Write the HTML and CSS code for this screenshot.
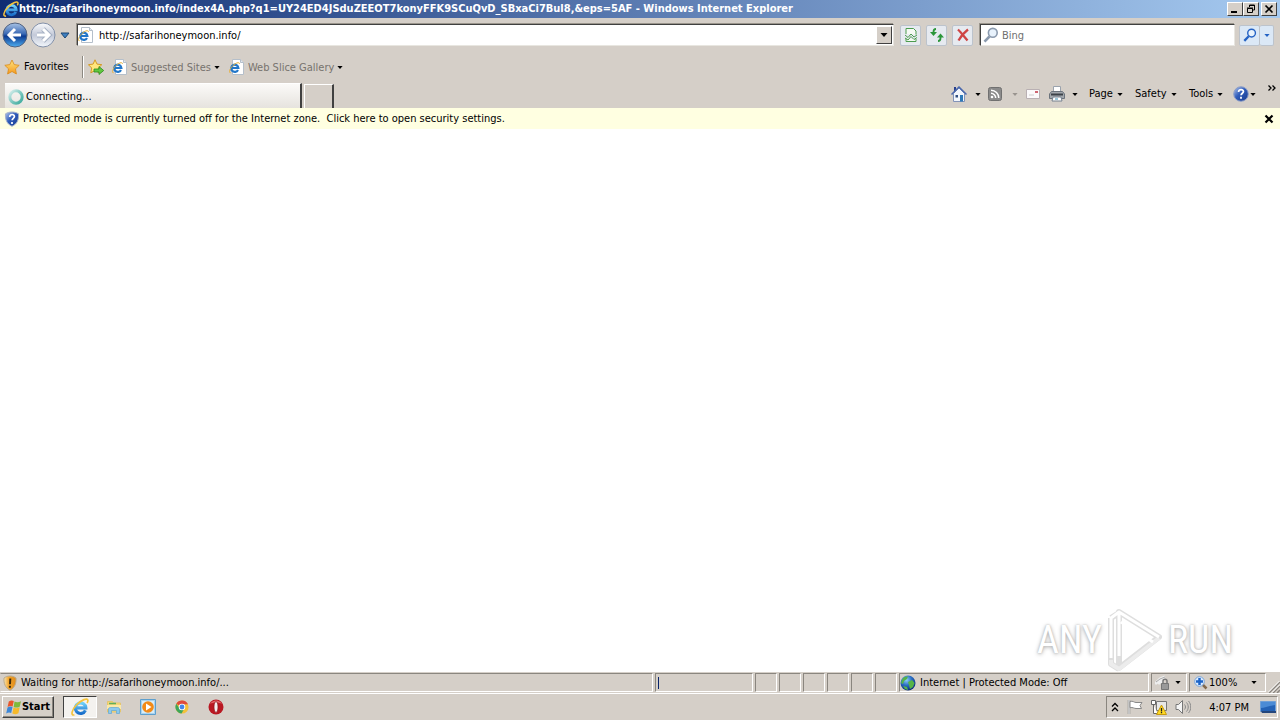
FILE: index.html
```html
<!DOCTYPE html>
<html lang="en">
<head>
<meta charset="utf-8">
<title>Windows Internet Explorer</title>
<link rel="stylesheet" href="styles.css">
</head>
<body>
<svg class="defs" aria-hidden="true">
  <defs>
    <linearGradient id="blue" x1="0" y1="0" x2="0" y2="1"><stop offset="0" stop-color="#a9c4e6"/><stop offset=".45" stop-color="#3a69b4"/><stop offset=".55" stop-color="#0c3a91"/><stop offset="1" stop-color="#4fb0f2"/></linearGradient>
    <linearGradient id="pale" x1="0" y1="0" x2="0" y2="1"><stop offset="0" stop-color="#fafbfd"/><stop offset=".5" stop-color="#c3c9d8"/><stop offset="1" stop-color="#f3f7fc"/></linearGradient>
    <linearGradient id="gold" x1="0" y1="0" x2="0" y2="1"><stop offset="0" stop-color="#ffe680"/><stop offset="1" stop-color="#f5981b"/></linearGradient>
    <linearGradient id="ieblue" x1="0" y1="0" x2="0" y2="1"><stop offset="0" stop-color="#6fd2fa"/><stop offset="1" stop-color="#1a6fcb"/></linearGradient>
    <linearGradient id="spin" x1="0" y1="0" x2="1" y2="1"><stop offset="0" stop-color="#d9efed"/><stop offset=".4" stop-color="#8fd0ca"/><stop offset="1" stop-color="#3aa99b"/></linearGradient>
    <linearGradient id="disc" x1="0" y1="0" x2="1" y2="1"><stop offset="0" stop-color="#b9cbee"/><stop offset=".45" stop-color="#2f5cba"/><stop offset="1" stop-color="#183a8c"/></linearGradient>
    <linearGradient id="amber" x1="0" y1="0" x2="1" y2="0"><stop offset="0" stop-color="#f7e3b0"/><stop offset=".4" stop-color="#f3a52c"/><stop offset="1" stop-color="#e08a18"/></linearGradient>
    <radialGradient id="earth" cx=".4" cy=".3" r=".7"><stop offset="0" stop-color="#8fd0f5"/><stop offset=".5" stop-color="#2b6fc4"/><stop offset="1" stop-color="#0b2f7c"/></radialGradient>
  </defs>
  <symbol id="ie" viewBox="0 0 16 16"><path d="M12.800 11A4.700 4.700 0 1 1 13.200 8.800H5" fill="none" stroke="url(#ieblue)" stroke-width="2.800"/><path d="M3 15C-.5 16 .5 10.500 5 6S14.500-.3 15 2c.1.800-.2 1.600-.7 2.400" fill="none" stroke="#f5c33c" stroke-width="1.500"/></symbol>
  <symbol id="iepage" viewBox="0 0 16 16"><path d="M3.500.5h8l3 3v12h-11z" fill="#fff" stroke="#b5bfca"/><path d="M11.500.5v3h3" fill="#e3e9f0" stroke="#b5bfca"/><path d="M9 11A3.600 3.600 0 1 1 9.400 9H3" fill="none" stroke="#2277c9" stroke-width="2.200"/><path d="M1.500 13.700C-.8 13.800.8 9.500 4 6.500s6.500-3.700 6.500-1.700" fill="none" stroke="#e8b13a"/></symbol>
  <symbol id="star" viewBox="0 0 16 16"><path d="M8 1l2.200 4.600 5 .7-3.700 3.500.9 5.200L8 12.500 3.600 15l.9-5.200L.8 6.300l5-.7z" fill="url(#gold)" stroke="#d98a1b" stroke-width=".8"/></symbol>
  <symbol id="addstar" viewBox="0 0 16 16"><path d="M7 .8l2 4.300 4.800.6-3.500 3.300.9 4.800L7 11.500 2.800 13.800l.9-4.800L.4 5.700l4.700-.6z" fill="#ffe67c" stroke="#d39a25"/><path d="M6 10h5V7.500l4.700 4-4.700 4V13H6z" fill="#62c840" stroke="#2b8a1e" stroke-width=".8"/></symbol>
  <symbol id="caret" viewBox="0 0 7 4"><path d="M0 0h7L3.500 4z" fill="currentColor"/></symbol>
  <symbol id="shield" viewBox="0 0 16 16"><path d="M8 1c2.500 0 4.500.6 6.500 1.800.5 6-1.500 10.300-6.500 12.500C3 13.100 1 8.800 1.500 2.800 3.500 1.600 5.500 1 8 1z" fill="url(#disc)" stroke="#a8b4cb"/><path d="M5.700 6c0-3.500 5-3 4.700-.3-.2 1.600-2.200 1.800-2.300 3.600M8 11v2" fill="none" stroke="#fff" stroke-width="1.700"/></symbol>
  <symbol id="warn" viewBox="0 0 16 16"><path d="M8 1c2.300 0 4.200.7 6 2 .5 5.500-1.500 10-6 12.200C3.500 13 1.500 8.500 2 3 3.800 1.700 5.700 1 8 1z" fill="url(#amber)" stroke="#b9a98c"/><path d="M8.300 3.500L8 9.200M7.900 10.700v2" stroke="#3c2a0c" stroke-width="2"/></symbol>
  <symbol id="lens" viewBox="0 0 16 16"><path d="M6.500 9.500L1.500 14.700" stroke="currentColor" stroke-width="2.600"/><circle cx="9.800" cy="5.800" r="4.400" fill="#e8f2fc" stroke="currentColor" stroke-width="1.600"/></symbol>
</svg>

<header class="titlebar">
  <svg class="i16"><use href="#ie"/></svg>
  <h1>http://safarihoneymoon.info/index4A.php?q1=UY24ED4JSduZEEOT7konyFFK9SCuQvD_SBxaCi7Bul8,&amp;eps=5AF - Windows Internet Explorer</h1>
  <div class="winbtns">
    <button aria-label="Minimize"><svg viewBox="0 0 12 10"><path d="M2 8h6" stroke="#000" stroke-width="2"/></svg></button>
    <button aria-label="Restore"><svg viewBox="0 0 12 10"><path d="M4.500 3V1h5v5H8M4 1.500h6M2.500 4.500h5v4h-5zM2 4h6" fill="none" stroke="#000"/></svg></button>
    <button class="close" aria-label="Close"><svg viewBox="0 0 12 10"><path d="M2.500 1.500l7 7m0-7l-7 7" stroke="#000" stroke-width="1.700"/></svg></button>
  </div>
</header>

<nav class="nav">
  <div class="travel">
    <button aria-label="Back"><svg class="i26" viewBox="0 0 26 26"><circle cx="13" cy="13" r="12" fill="url(#blue)" stroke="#50617f"/><path d="M13 7L7 13l6 6M7.500 13H19" fill="none" stroke="#fff" stroke-width="3"/></svg></button>
    <button aria-label="Forward"><svg class="i26" viewBox="0 0 26 26"><circle cx="13" cy="13" r="12" fill="url(#pale)" stroke="#8290a8"/><path d="M13 7l6 6-6 6M18.500 13H7" fill="none" stroke="#a5b0c3" stroke-width="5"/><path d="M13 7l6 6-6 6M18.500 13H7" fill="none" stroke="#fff" stroke-width="3"/></svg></button>
    <button aria-label="Recent pages"><svg class="recent" viewBox="0 0 10 7"><path d="M1 1h8L5 6z" fill="#3d7fc0" stroke="#1c4775"/></svg></button>
  </div>
  <div class="field address">
    <svg class="i16"><use href="#iepage"/></svg>
    <input type="text" aria-label="Address" value="http://safarihoneymoon.info/">
    <button class="drop" aria-label="Show addresses"><svg class="caret wide"><use href="#caret"/></svg></button>
  </div>
  <div class="tools">
    <button aria-label="Compatibility View"><svg class="i16" viewBox="0 0 16 16"><path d="M3 7V1.500h7.500L13 4v3.500M3 11.500v3h10V12" fill="#f5faf4" stroke="#4c9c4f"/><path d="M2 8l3 2.500 3-3.500 3 3 3-2M2 11l3 2 3-3.500 3 3 3-2" fill="none" stroke="#4c9c4f"/></svg></button>
    <button aria-label="Refresh"><svg class="i16" viewBox="0 0 16 16"><path d="M7 2C5 2 4.500 3 4.500 5v1M9 14c2 0 2.500-1 2.500-3v-1" fill="none" stroke="#2c963a" stroke-width="1.800"/><path d="M1 5h7L4.500 9zM8 10.500h7l-3.500-4z" fill="#2c963a"/></svg></button>
    <button aria-label="Stop"><svg class="i16" viewBox="0 0 16 16"><path d="M3 2.500c3 3 6 7 9.500 11M13 2.500C9 5.500 6 9 3.500 13.500" fill="none" stroke="#cf4444" stroke-width="2.300"/></svg></button>
  </div>
  <div class="field search">
    <svg class="i16 grey"><use href="#lens"/></svg>
    <input type="text" aria-label="Search" placeholder="Bing">
  </div>
  <div class="go">
    <button aria-label="Search"><svg class="i14 azure"><use href="#lens"/></svg></button>
    <button aria-label="Search options"><svg class="caret azure"><use href="#caret"/></svg></button>
  </div>
</nav>

<nav class="favorites">
  <button class="fav"><svg class="i16"><use href="#star"/></svg>Favorites</button>
  <span class="rule"></span>
  <button aria-label="Add to Favorites Bar"><svg class="i16"><use href="#addstar"/></svg></button>
  <button class="dim suggested"><svg class="i16"><use href="#iepage"/></svg><span>Suggested Sites</span><svg class="caret"><use href="#caret"/></svg></button>
  <button class="dim"><svg class="i16"><use href="#iepage"/></svg><span>Web Slice Gallery</span><svg class="caret"><use href="#caret"/></svg></button>
</nav>

<div class="tabrow">
  <button class="tab"><svg class="i16" viewBox="0 0 16 16"><circle cx="8" cy="8" r="6.200" fill="none" stroke="url(#spin)" stroke-width="3"/></svg>Connecting...</button>
  <button class="newtab" aria-label="New Tab"></button>
  <div class="commands">
    <button class="cmd c-home" aria-label="Home"><svg class="i16" viewBox="0 0 16 16"><path d="M3 1h2v4H3z" fill="#27408d"/><path d="M2.500 7.500L8 2l5.500 5.500v8h-11z" fill="#f2f6fc" stroke="#8293b8"/><path d="M.5 8.500L8 1l7.500 7.500" fill="none" stroke="#4a68ad" stroke-width="1.500"/><path d="M9 9h3v6.500H9z" fill="#2e79b8"/><path d="M4.500 9h2.500v2.500H4.500z" fill="#314f81"/></svg><svg class="caret"><use href="#caret"/></svg></button>
    <button class="cmd c-feed" aria-label="Feeds"><svg class="i14" viewBox="0 0 14 14"><rect x=".5" y=".5" width="13" height="13" rx="2" fill="#8b8b8b" stroke="#707070"/><circle cx="4" cy="10" r="1.300" fill="#fff"/><path d="M3 6.300A4.700 4.700 0 0 1 7.700 11M3 3.200A7.800 7.800 0 0 1 10.800 11" fill="none" stroke="#fff" stroke-width="1.500"/></svg><svg class="caret faint"><use href="#caret"/></svg></button>
    <button class="cmd c-mail" aria-label="Read mail"><svg class="i14" viewBox="0 0 14 14"><path d="M.5 2.500h13v9H.5z" fill="#fbf9fa" stroke="#b9b0b3"/><path d="M9 4h3v2H9z" fill="#cf6571"/><path d="M3 8h5" stroke="#ccc"/></svg></button>
    <button class="cmd c-print" aria-label="Print"><svg class="i16" viewBox="0 0 16 16"><path d="M4.500.5h7v6h-7z" fill="#fff" stroke="#9ba3ad"/><path d="M2.500 5.500h11l2 2.500v4.500H.5V8z" fill="#a3a8ad" stroke="#6b737c"/><path d="M2 8.500h12" stroke="#3c4248" stroke-width="2"/><path d="M4 11h8l1 4H3z" fill="#fff" stroke="#77828f"/><path d="M6 13h3" stroke="#3b91b5"/></svg><svg class="caret"><use href="#caret"/></svg></button>
    <button class="cmd c-page">Page<svg class="caret"><use href="#caret"/></svg></button>
    <button class="cmd c-safe">Safety<svg class="caret"><use href="#caret"/></svg></button>
    <button class="cmd c-tool">Tools<svg class="caret"><use href="#caret"/></svg></button>
    <button class="cmd c-help" aria-label="Help"><svg class="i16" viewBox="0 0 16 16"><circle cx="8" cy="8" r="7.300" fill="url(#disc)" stroke="#8e9fc8"/><path d="M5.600 6c0-3.400 5-3 4.800-.3C10.200 7.300 8.200 7.300 8.100 9.300M8 10.800v2" fill="none" stroke="#fff" stroke-width="1.800"/></svg><svg class="caret"><use href="#caret"/></svg></button>
    <button class="more" aria-label="More commands"><svg viewBox="0 0 8 6"><path d="M.5.5L3 3 .5 5.500M4.500.5L7 3 4.500 5.500" fill="none" stroke="#000" stroke-width="1.300"/></svg></button>
  </div>
</div>

<div class="infobar">
  <svg class="i16"><use href="#shield"/></svg>
  <a href="#settings">Protected mode is currently turned off for the Internet zone.&nbsp; Click here to open security settings.</a>
  <button aria-label="Close information bar"><svg viewBox="0 0 10 10"><path d="M1.500 1.500l7 7m0-7l-7 7" stroke="#000" stroke-width="2.200"/></svg></button>
</div>

<main class="page">
  <div class="watermark">
    <span>ANY</span>
    <svg viewBox="0 0 56 64"><g fill="none" stroke-linejoin="round"><g stroke="#dedede" stroke-width="6"><path d="M12 4l40 25-40 31z"/><path d="M4 10v46l8 5M4 10l8-5"/></g><path d="M4 52v4l8 5 40-31" stroke="#ececec" stroke-width="4"/><path d="M4 50V10l8-6v44M12 4l40 25M14 14l32 20" stroke="#fff" stroke-width="3"/></g></svg>
    <span>RUN</span>
  </div>
</main>

<footer class="status">
  <div class="cell message"><svg class="i16"><use href="#warn"/></svg>Waiting for http://safarihoneymoon.info/...</div>
  <div class="cell progress"><span class="bar"></span></div>
  <div class="cell slot"></div><div class="cell slot"></div><div class="cell slot"></div><div class="cell slot"></div><div class="cell slot"></div><div class="cell slot"></div>
  <div class="cell zone"><svg class="i16" viewBox="0 0 16 16"><circle cx="8" cy="8" r="7.500" fill="url(#earth)"/><path d="M2 5c1-3 4-4 6-3.500L7 4 4 6l-1 3-2-1zM8 7l4-2 2.500 3-1.500 4-3 2-1-4zM3 11l4 1 1 3-3-1z" fill="#55b447"/></svg>Internet | Protected Mode: Off</div>
  <button class="cell privacy" aria-label="InPrivate filtering"><svg class="i16" viewBox="0 0 16 16"><path d="M0 9l5-5 5-2M3 9c2-3 4-3 6-2" fill="none" stroke="#eee" stroke-width="3"/><path d="M1 7l4-3 5-2" fill="none" stroke="#aaa"/><path d="M8 9V6c0-2.500 4-2.500 4 0v3" fill="none" stroke="#777" stroke-width="1.500"/><path d="M6.500 8.500h7v6h-7z" fill="#999" stroke="#777"/></svg><svg class="caret"><use href="#caret"/></svg></button>
  <button class="cell zoom"><svg class="i14" viewBox="0 0 14 14"><path d="M8.500 8.500l4 4" stroke="#83694b" stroke-width="2.500"/><circle cx="5.500" cy="5.500" r="4.800" fill="#dcecff" stroke="#78a3d7"/><path d="M5.500 2v7M2 5.500h7" stroke="#1c64c8" stroke-width="2.500"/></svg><span>100%</span><svg class="caret"><use href="#caret"/></svg></button>
  <svg class="grip" viewBox="0 0 12 12"><path d="M1 12L12 1M5 12l7-7M9 12l3-3" stroke="#8b8680" stroke-width="1.500"/><path d="M0 11.500L11.500 0M4 11.500L12 3.500" stroke="#fff"/></svg>
</footer>

<div class="taskbar">
  <button class="start"><svg class="i16" viewBox="0 0 16 16"><path d="M2.800 2.500c2-1.500 3.500-1.300 5-.5L6.600 7.500c-1.600-.8-3-.8-5 .4z" fill="#e9562c"/><path d="M8.500 2.500c2 1 4 1 6.500-.3l-1.300 5.500c-2.500 1.200-4.200 1-6 .2z" fill="#7fba3c"/><path d="M1.500 8.400c2-1.200 3.400-1.200 5-.4l-1.300 6C3.500 13.200 2.200 13.200.2 14.500z" fill="#3c87d8"/><path d="M7.500 8.500c2 1 3.800 1 6.200-.2l-1.300 6c-2.300 1.200-4 1-6 .2z" fill="#f6b92b"/></svg>Start</button>
  <button class="task active" aria-label="Internet Explorer"><svg class="i18"><use href="#ie"/></svg></button>
  <button class="task" aria-label="Explorer"><svg class="i16" viewBox="0 0 16 16"><path d="M1.500 2.500h5l1 1.500h7v9h-13z" fill="#f5d778" stroke="#e5c56d"/><path d="M3 4.500h7" stroke="#5fae5b" stroke-width="1.500"/><path d="M1 6h14v4H1z" fill="#fbe9a9"/><path d="M2.500 14.500V10c0-1 1-1.500 2-1.500h7c1 0 2 .5 2 1.500v4.500h-3v-3h-5v3z" fill="#8cc9ee" stroke="#62a6d3" stroke-width=".7"/></svg></button>
  <button class="task" aria-label="Media Player"><svg class="i16" viewBox="0 0 16 16"><path d="M.5.500h15v15H.5z" fill="#a9d3ef" stroke="#5e9fcd"/><path d="M2 2h12v12H2z" fill="#d7edf9"/><circle cx="8" cy="8" r="5.800" fill="#f28a18"/><path d="M6 4.500l5.500 3.500L6 11.500z" fill="#fff"/></svg></button>
  <button class="task" aria-label="Chrome"><svg class="i14" viewBox="0 0 16 16"><circle cx="8" cy="8" r="7.500" fill="#f3c13a"/><path d="M8 8L1.500 4.200A7.500 7.500 0 0 1 14.800 4.800L8 5z" fill="#df4a3c"/><path d="M1.500 4.200A7.500 7.500 0 0 0 7.500 15.500L10.500 10 5.500 10z" fill="#3da55b"/><circle cx="8" cy="8" r="3.700" fill="#fff"/><circle cx="8" cy="8" r="2.800" fill="#4586e8"/></svg></button>
  <button class="task" aria-label="Opera"><svg class="i16" viewBox="0 0 16 16"><circle cx="8" cy="8" r="7.500" fill="#b91822"/><path d="M2 5a7 7 0 0 1 12 0c-3-2-9-2-12 0z" fill="#e4666a"/><ellipse cx="8" cy="8" rx="2" ry="5.500" fill="#f5eeee" stroke="#8b1218" stroke-width=".7"/></svg></button>
  <div class="tray">
    <svg class="chev" viewBox="0 0 8 10"><path d="M1 4.500L4 1.500l3 3M1 9l3-3 3 3" fill="none" stroke="#000" stroke-width="1.300"/></svg>
    <svg class="i16" viewBox="0 0 16 16"><path d="M2 1v14" stroke="#888" stroke-width="2.500"/><path d="M2 1v14" stroke="#fff"/><path d="M3 2.500c3-1 4 1 6 1h6l-2 3 1.500 3H9c-2 0-3-1.500-6-.8z" fill="#fff" stroke="#888"/></svg>
    <svg class="i16" viewBox="0 0 16 16"><path d="M5.500 2.500h10v9h-10z" fill="#e8e8e8" stroke="#777"/><path d="M.5 1.500h4v4h-4zM2.500 5.500v9h4" fill="#fff" stroke="#666"/><path d="M10.500 6l5 9.500h-10z" fill="#ffda23" stroke="#c79a10"/><path d="M10.500 9v3.500M10.500 13v1.300" stroke="#222" stroke-width="1.300"/></svg>
    <svg class="i16" viewBox="0 0 16 16"><path d="M1 5.500h2.500l4-4v13l-4-4H1z" fill="#f4f4f4" stroke="#777"/><path d="M9.500 5.500c1.300 1.500 1.300 3.500 0 5M11.500 3.500c2.300 2.500 2.300 6.500 0 9M13.500 2c3 3.500 3 8.500 0 12" fill="none" stroke="#888"/></svg>
    <time>4:07 PM</time>
    <button class="desk" aria-label="Show desktop"><svg class="i16" viewBox="0 0 16 16"><path d="M.5 2.500h15v10H.5z" fill="#2462b5" stroke="#6f9fd6"/><path d="M1 3h14v3C9 7 5 9 1 9z" fill="#4b8bd5"/><path d="M1 12h15v2H2z" fill="#24467c"/></svg></button>
  </div>
</div>
</body>
</html>
```
FILE: styles.css
```css
* { box-sizing: border-box; }
html, body { height: 100%; }
body {
  margin: 0;
  display: flex;
  flex-direction: column;
  background: #d5cfc8;
  color: #000;
  font: 11px/14px "DejaVu Sans Condensed", "DejaVu Sans", sans-serif;
}
button, input {
  font: inherit;
  color: inherit;
  border: 0;
  padding: 0;
  margin: 0;
  background: none;
}
button { display: flex; align-items: center; justify-content: center; white-space: nowrap; }
input { outline: 0; flex: 1; min-width: 0; }
svg { display: block; flex: none; }
.defs { position: absolute; width: 0; height: 0; }
.i14 { width: 14px; height: 14px; }
.i16 { width: 16px; height: 16px; }
.i18 { width: 18px; height: 18px; }
.i26 { width: 26px; height: 26px; }
.caret { width: 6px; height: 3px; }
.wide { width: 8px; height: 4px; }
.faint { color: #99948f; }
.grey { color: #8b9aae; }
.azure { color: #2462c4; }

.titlebar {
  display: flex;
  align-items: center;
  height: 18px;
  padding: 0 3px;
  background: linear-gradient(90deg, #0f2c72, #a6caf0);
}
.titlebar h1 {
  flex: 1;
  min-width: 0;
  margin: 0;
  overflow: hidden;
  white-space: nowrap;
  font-size: 11px;
  line-height: 16px;
  color: #fff;
}
.winbtns { display: flex; }
.winbtns button {
  width: 16px;
  height: 14px;
  background: #d5cfc8;
  border: 1px solid;
  border-color: #fff #404040 #404040 #fff;
}
.winbtns svg { width: 12px; height: 10px; }
.winbtns .close { margin-left: 2px; }

.nav { display: flex; align-items: center; height: 34px; padding: 0 6px 0 2px; }
.travel { display: flex; align-items: center; gap: 2px; width: 75px; }
.recent { width: 10px; height: 7px; margin-left: 2px; }
.field {
  display: flex;
  align-items: center;
  height: 22px;
  background: #fff;
  border: 1px solid;
  border-color: #404040 #e8e6e0 #e8e6e0 #404040;
  box-shadow: -1px -1px #9a958c;
}
.field input { padding: 1px 0 0 4px; height: 18px; }
.address { flex: 1; }
.address input { padding-left: 5px; }
.drop {
  width: 16px;
  height: 18px;
  margin-right: 1px;
  background: #d5cfc8;
  border: 1px solid;
  border-color: #fff #404040 #404040 #fff;
}
.tools { display: flex; gap: 5px; margin: 0 7px 0 6px; }
.tools button, .go button {
  width: 21px;
  height: 21px;
  background: #e6eaf0;
  border: 1px solid #bcc3cc;
  border-radius: 2px;
}
.search { width: 255px; padding-left: 2px; }
.search input { padding-left: 3px; }
.search input::placeholder { color: #6f6f6f; opacity: 1; }
.go { display: flex; margin-left: 4px; }
.go button { background: #dbe8f6; }
.go button + button { width: 14px; border-left: 0; }

.favorites { display: flex; align-items: center; height: 30px; padding: 0 4px; }
.fav { gap: 4px; width: 68px; justify-content: flex-start; }
.rule { width: 2px; height: 22px; margin: 0 4px 0 10px; border-left: 1px solid #8c8881; border-right: 1px solid #fff; }
.dim { gap: 3px; margin-left: 9px; }
.favorites .suggested { margin-left: 8px; }
.dim span { padding-top: 1px; color: #77736e; }

.tabrow { display: flex; align-items: flex-end; height: 26px; padding-left: 5px; }
.tab {
  width: 297px;
  height: 25px;
  padding: 1px 0 0 3px;
  gap: 2px;
  justify-content: flex-start;
  background: linear-gradient(#fbfaf8, #e6e3de);
  border-right: 2px solid #404040;
  border-top: 1px solid #fff;
}
.newtab {
  width: 30px;
  height: 24px;
  margin-left: 2px;
  border: 1px solid #fff;
  border-right: 2px solid #404040;
  border-bottom: 0;
}
.commands { display: flex; align-items: center; margin-left: auto; height: 28px; padding-right: 4px; }
.cmd { justify-content: flex-start; gap: 4px; }
.c-home { gap: 8px; width: 37px; }
.c-feed { gap: 10px; width: 38px; }
.c-mail { width: 23px; }
.c-print { gap: 7px; width: 40px; }
.c-page { width: 46px; }
.c-safe { width: 54px; }
.c-tool { width: 44px; }
.c-help { gap: 1px; width: 35px; }
.more { align-self: flex-start; padding-top: 5px; }
.more svg { width: 8px; height: 6px; }

.infobar {
  display: flex;
  align-items: center;
  height: 21px;
  padding: 0 6px 0 4px;
  gap: 3px;
  background: #ffffe1;
}
.infobar a { flex: 1; padding-top: 1px; color: #000; text-decoration: none; }
.infobar button svg { width: 10px; height: 10px; }

.page { flex: 1; position: relative; background: #fff; }
.watermark {
  position: absolute;
  right: 47px;
  bottom: 0;
  display: flex;
  align-items: center;
  gap: 5px;
  color: #fff;
  font: 38px/54px "Liberation Sans Narrow", "Roboto Condensed", "Liberation Sans", sans-serif;
  text-shadow: 0 0 2px #bbb, 0 1px 4px #aaa;
}
.watermark svg { width: 56px; height: 64px; }

.status {
  display: flex;
  align-items: center;
  height: 22px;
  gap: 2px;
  border-bottom: 1px solid #fff;
}
.cell {
  display: flex;
  align-items: center;
  height: 19px;
  border: 1px solid;
  border-color: #8a867f #fff #fff #8a867f;
  white-space: nowrap;
}
.message { flex: 1; gap: 3px; padding-left: 1px; border-left-color: #d5cfc8; }
.progress { width: 98px; padding-left: 2px; }
.bar { width: 1px; height: 12px; background: #0a246a; }
.slot { width: 22px; }
.zone { width: 250px; gap: 4px; }
.privacy { width: 36px; gap: 4px; justify-content: flex-start; padding-left: 3px; }
.zoom { width: 77px; gap: 1px; justify-content: flex-start; padding-left: 4px; }
.zoom span { width: 41px; text-align: left; }
.grip { width: 12px; height: 12px; align-self: flex-end; }

.taskbar { display: flex; align-items: center; height: 26px; padding: 0 2px; }
.start {
  width: 52px;
  height: 22px;
  margin-right: 9px;
  font-weight: bold;
  border: 1px solid;
  border-color: #fff #404040 #404040 #fff;
  box-shadow: inset -1px -1px #8a867f;
}
.task { width: 34px; height: 22px; }
.active {
  background: #f4f2ef;
  border: 1px solid;
  border-color: #404040 #fff #fff #404040;
}
.tray {
  display: flex;
  align-items: center;
  width: 172px;
  height: 22px;
  margin-left: auto;
  padding-left: 4px;
  gap: 8px;
  border: 1px solid;
  border-color: #8a867f #fff #fff #8a867f;
}
.chev { width: 8px; height: 10px; }
.tray time { flex: 1; padding: 1px 3px 0 0; text-align: right; white-space: nowrap; }
.desk { margin-right: 1px; }
```
